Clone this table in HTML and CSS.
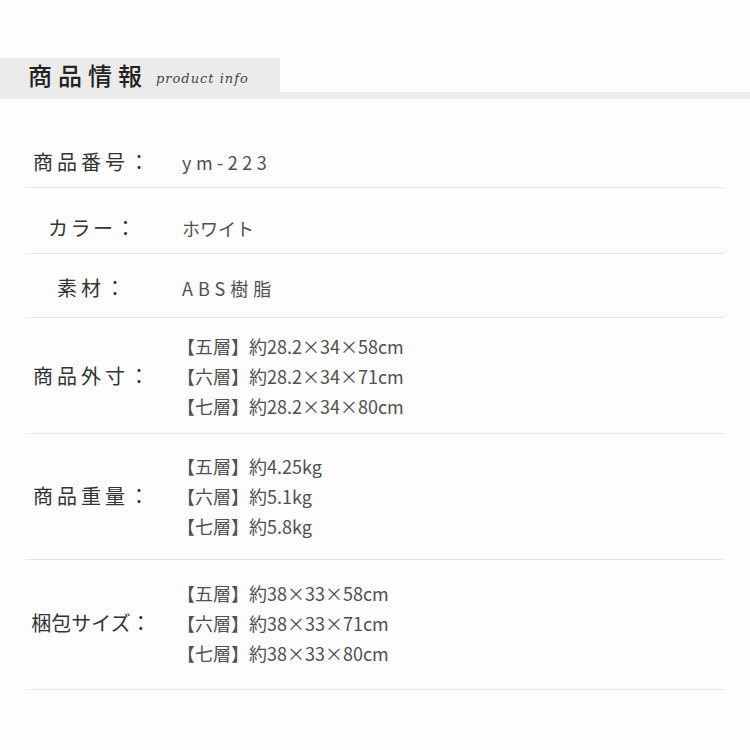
FILE: index.html
```html
<!DOCTYPE html>
<html lang="ja">
<head>
<meta charset="utf-8">
<link rel="stylesheet" href="styles.css">
</head>
<body>
<div class="page">
  <div class="head">
    <div class="head-box">
      <h1 class="title">商品情報</h1>
      <span class="sub">product info</span>
    </div>
  </div>
  <div class="specs">
    <div class="row r1">
      <div class="label">商品番号：</div>
      <div class="value spaced">ym-223</div>
    </div>
    <div class="row r2">
      <div class="label label-tight">カラー：</div>
      <div class="value">ホワイト</div>
    </div>
    <div class="row r3">
      <div class="label">素材：</div>
      <div class="value spaced-sm">ABS樹脂</div>
    </div>
    <div class="row r4">
      <div class="label">商品外寸：</div>
      <div class="value multi">
        <div>【五層】約28.2×34×58cm</div>
        <div>【六層】約28.2×34×71cm</div>
        <div>【七層】約28.2×34×80cm</div>
      </div>
    </div>
    <div class="row r5">
      <div class="label">商品重量：</div>
      <div class="value multi">
        <div>【五層】約4.25kg</div>
        <div>【六層】約5.1kg</div>
        <div>【七層】約5.8kg</div>
      </div>
    </div>
    <div class="row r6">
      <div class="label label-none">梱包サイズ：</div>
      <div class="value multi">
        <div>【五層】約38×33×58cm</div>
        <div>【六層】約38×33×71cm</div>
        <div>【七層】約38×33×80cm</div>
      </div>
    </div>
  </div>
</div>
</body>
</html>
```
FILE: styles.css
```css
html, body {
  margin: 0;
  padding: 0;
  background: #fdfdfd;
}
.page {
  width: 750px;
  height: 750px;
  padding-top: 58px;
  box-sizing: border-box;
  font-family: "Noto Sans CJK JP", "Noto Sans", sans-serif;
}
.head {
  border-bottom: 7px solid #ebebeb;
}
.head-box {
  width: 280px;
  height: 34px;
  background: #ebebeb;
  display: flex;
  align-items: center;
  padding-left: 28px;
  box-sizing: border-box;
}
.title {
  margin: 0;
  font-size: 24px;
  font-weight: 500;
  letter-spacing: 6px;
  color: #222;
  line-height: 34px;
}
.sub {
  margin-left: 8px;
  margin-top: 6px;
  font-family: "DejaVu Serif", serif;
  font-style: italic;
  font-size: 13px;
  color: #444;
  letter-spacing: 1px;
}
.specs {
  margin: 0 26px;
}
.row {
  display: flex;
  align-items: center;
  border-bottom: 1px solid #e6e6e6;
}
.label {
  width: 134px;
  flex: none;
  white-space: nowrap;
  text-align: center;
  font-size: 20px;
  letter-spacing: 4px;
  color: #333;
  line-height: 30px;
}
.label-tight {
  letter-spacing: 2.5px;
}
.label-none {
  letter-spacing: 0;
  padding-right: 4px;
  box-sizing: border-box;
}
.value {
  margin-left: 22px;
  font-size: 18px;
  color: #505050;
  line-height: 30px;
}
.multi {
  margin-left: 17px;
}
.spaced {
  letter-spacing: 4.5px;
}
.spaced-sm {
  letter-spacing: 5px;
}
.r1 { padding: 48px 0 10px; }
.r2 { padding: 25px 0 10px; }
.r3 { padding: 19px 0 14px; }
.r4 { padding: 13px 0 12px; }
.r5 { padding: 17px 0 18px; }
.r6 { padding: 18px 0 21px; }
```
